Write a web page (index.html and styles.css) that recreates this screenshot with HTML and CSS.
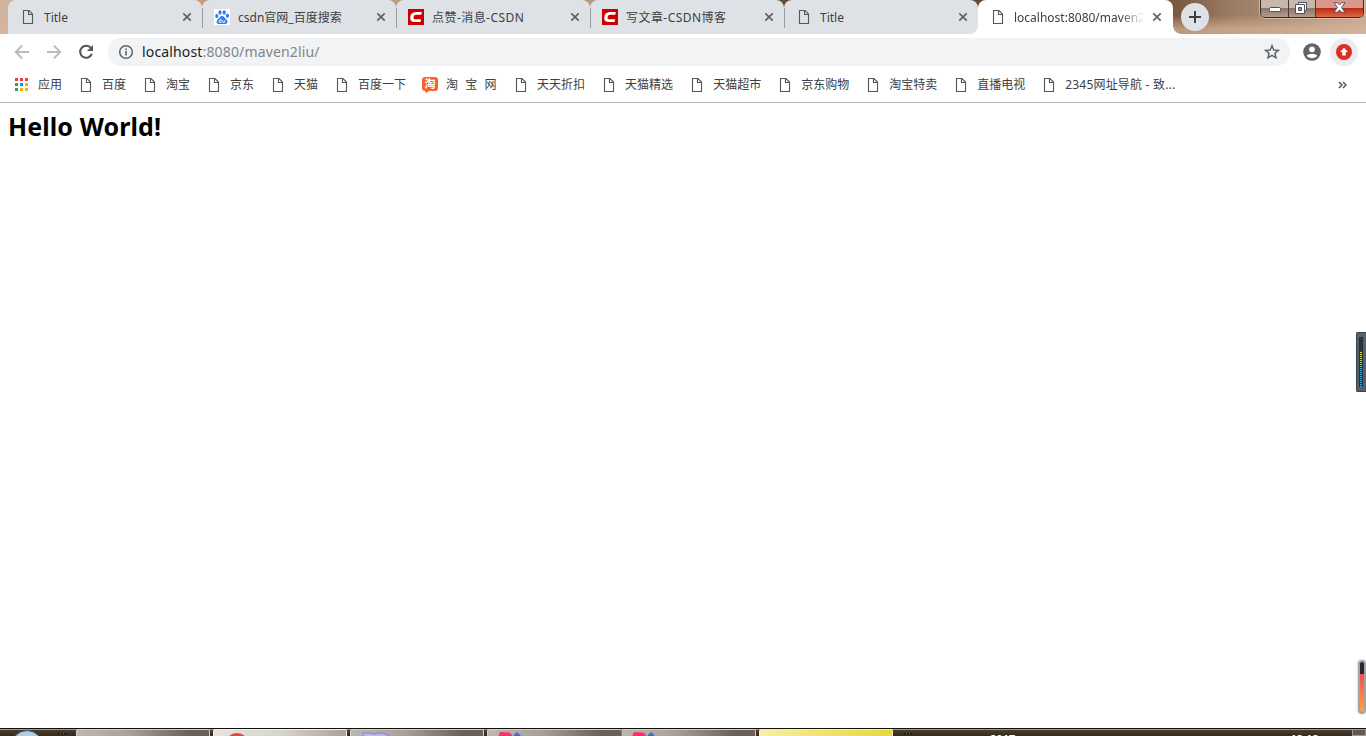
FILE: index.html
```html
<!DOCTYPE html>
<html lang="zh-CN">
<head>
    <meta charset="UTF-8">
    <title>localhost:8080/maven2liu/</title>
    <link rel="stylesheet" href="styles.css">
</head>
<body>
    <svg class="defs" width="0" height="0">
        <symbol id="page" viewBox="0 0 16 16">
            <path d="M3.5 1.5H9L12.5 5V14.5H3.5ZM8.5 1.5V5.5H12.5" fill="none" stroke="#55585b" stroke-width="1.1"/>
        </symbol>
        <symbol id="close" viewBox="0 0 10 10">
            <path d="M1.3 1.3L8.7 8.7M8.7 1.3L1.3 8.7" stroke="#5f6368" stroke-width="1.7"/>
        </symbol>
        <symbol id="csdn" viewBox="0 0 16 16">
            <path d="M0 0H16V16H0Z" fill="#c90000"/>
            <path d="M13.8 3H8Q2.6 3.2 2.2 8.4Q2.1 13 6.8 13H12.6L13.1 10.3H7.8Q5.3 10.3 5.5 8.2Q5.8 5.8 8.4 5.8H13.3Z" fill="#fff"/>
        </symbol>
        <symbol id="app" viewBox="0 0 24 7">
            <path d="M2 2L11 2.5L14 5V7H0Z" fill="#fb3269"/>
            <path d="M19 2L24 7H14Z" fill="#4267d5"/>
        </symbol>
    </svg>

    <div class="browser">
        <div class="tab-strip">
            <div class="tab first">
                <svg class="icon"><use href="#page"/></svg>
                <span class="tab-title">Title</span>
                <svg class="close"><use href="#close"/></svg>
            </div>
            <div class="tab">
                <svg class="icon" viewBox="0 0 16 16">
                    <path d="M0 0H16V16H0Z" fill="#fff"/>
                    <g fill="#2c7df5">
                        <ellipse cx="2.8" cy="7" rx="1.6" ry="2.1"/>
                        <ellipse cx="6" cy="3.4" rx="1.6" ry="2.2"/>
                        <ellipse cx="10.2" cy="3.4" rx="1.6" ry="2.2"/>
                        <ellipse cx="13.4" cy="6.8" rx="1.6" ry="2.1"/>
                        <path d="M8 7C10 7 10.5 9 12.4 10.4C14.5 12 13.4 15 11 15H5C2.4 15 1.8 12 3.8 10.4C5.7 9 6 7 8 7Z"/>
                    </g>
                    <path d="M7 9.5V13.5H5.4Q4.6 12.4 5.4 11.3H7M8.8 11V13.4H10.8V11" fill="none" stroke="#fff" stroke-width=".8"/>
                </svg>
                <span class="tab-title">csdn官网_百度搜索</span>
                <svg class="close"><use href="#close"/></svg>
            </div>
            <div class="tab">
                <svg class="icon"><use href="#csdn"/></svg>
                <span class="tab-title wide">点赞-消息-CSDN</span>
                <svg class="close"><use href="#close"/></svg>
            </div>
            <div class="tab">
                <svg class="icon"><use href="#csdn"/></svg>
                <span class="tab-title wide">写文章-CSDN博客</span>
                <svg class="close"><use href="#close"/></svg>
            </div>
            <div class="tab last">
                <svg class="icon"><use href="#page"/></svg>
                <span class="tab-title">Title</span>
                <svg class="close"><use href="#close"/></svg>
            </div>
            <div class="tab active">
                <svg class="icon"><use href="#page"/></svg>
                <span class="tab-title">localhost:8080/maven2liu/</span>
                <svg class="close"><use href="#close"/></svg>
            </div>
            <div class="new-tab">
                <svg width="12" height="12" viewBox="0 0 12 12"><path d="M6 0V12M0 6H12" stroke="#3c4043" stroke-width="2"/></svg>
            </div>
            <div class="window-buttons">
                <div class="win-btn">
                    <svg width="12" height="6" viewBox="0 0 12 6"><rect x=".5" y=".5" width="11" height="4" rx="1" fill="#fff" stroke="#4c5064"/></svg>
                </div>
                <div class="win-btn restore">
                    <svg width="12" height="12" viewBox="0 0 12 12">
                        <path d="M3.5.5H11.5V8.5H3.5Z" fill="#fff" stroke="#4c5064"/>
                        <path d="M.5 2.5H9.5V11.5H.5Z" fill="#fff" stroke="#4c5064"/>
                        <path d="M3.5 5.5H6.5V8.5H3.5Z" fill="#a09088" stroke="#4c5064"/>
                    </svg>
                </div>
                <div class="win-btn win-close">
                    <svg width="13" height="11" viewBox="0 0 13 11">
                        <path d="M1 .7H4.3L6.5 3L8.7.7H12L8.6 5.5L12 10.3H8.7L6.5 8L4.3 10.3H1L4.4 5.5Z" fill="#fff" stroke="#5b4a5c"/>
                    </svg>
                </div>
            </div>
        </div>

        <div class="toolbar">
            <svg class="nav" viewBox="0 0 16 16"><path d="M15 8H2M8.2 1.5L1.7 8L8.2 14.5" fill="none" stroke="#babcbe" stroke-width="1.9"/></svg>
            <svg class="nav" viewBox="0 0 16 16"><path d="M1 8H14M7.8 1.5L14.3 8L7.8 14.5" fill="none" stroke="#babcbe" stroke-width="1.9"/></svg>
            <svg class="nav" viewBox="0 0 16 16">
                <path d="M13 4.2A6 6 0 1 0 13.8 9.8" fill="none" stroke="#54585d" stroke-width="2.1"/>
                <path d="M15 1V7H9Z" fill="#54585d"/>
            </svg>
            <div class="address">
                <svg width="16" height="16" viewBox="0 0 16 16">
                    <circle cx="8" cy="8" r="6.3" fill="none" stroke="#5f6368" stroke-width="1.5"/>
                    <path d="M8 7V11.5M8 4.4V6" stroke="#5f6368" stroke-width="1.6"/>
                </svg>
                <span class="url">localhost<span>:8080/maven2liu/</span></span>
                <svg class="star" viewBox="0 0 16 16"><path d="M8 1.8L9.8 6L14.4 6.3L10.9 9.3L12 13.8L8 11.4L4 13.8L5.1 9.3L1.6 6.3L6.2 6Z" fill="none" stroke="#5f6368" stroke-width="1.5"/></svg>
            </div>
            <svg class="profile" viewBox="0 0 18 18">
                <circle cx="9" cy="9" r="8.8" fill="#5f6368"/>
                <circle cx="9" cy="6.3" r="2.9" fill="#fff"/>
                <path d="M3.6 12.7C5.5 10 12.5 10 14.4 12.7C12 16 6 16 3.6 12.7Z" fill="#fff"/>
            </svg>
            <div class="update">
                <svg width="16" height="16" viewBox="0 0 16 16">
                    <circle cx="8" cy="8" r="8" fill="#d93025"/>
                    <path d="M8 3.7L12 8H9.8V11.6H6.2V8H4Z" fill="#fff"/>
                </svg>
            </div>
        </div>

        <div class="bookmarks">
            <div class="bookmark apps">
                <svg class="icon" viewBox="0 0 16 16">
                    <path d="M1 1H4V4H1ZM6 1H9V4H6ZM11 1H14V4H11Z" fill="#ea4335"/>
                    <path d="M1 6H4V9H1ZM1 11H4V14H1Z" fill="#34a058"/>
                    <path d="M6 6H9V9H6Z" fill="#1a8cff"/>
                    <path d="M11 6H14V9H11ZM6 11H9V14H6ZM11 11H14V14H11Z" fill="#fbad05"/>
                </svg>应用</div>
            <div class="bookmark"><svg class="icon"><use href="#page"/></svg>百度</div>
            <div class="bookmark"><svg class="icon"><use href="#page"/></svg>淘宝</div>
            <div class="bookmark"><svg class="icon"><use href="#page"/></svg>京东</div>
            <div class="bookmark"><svg class="icon"><use href="#page"/></svg>天猫</div>
            <div class="bookmark"><svg class="icon"><use href="#page"/></svg>百度一下</div>
            <div class="bookmark taobao"><span class="tao">淘</span>淘&nbsp; 宝&nbsp; 网</div>
            <div class="bookmark"><svg class="icon"><use href="#page"/></svg>天天折扣</div>
            <div class="bookmark"><svg class="icon"><use href="#page"/></svg>天猫精选</div>
            <div class="bookmark"><svg class="icon"><use href="#page"/></svg>天猫超市</div>
            <div class="bookmark"><svg class="icon"><use href="#page"/></svg>京东购物</div>
            <div class="bookmark"><svg class="icon"><use href="#page"/></svg>淘宝特卖</div>
            <div class="bookmark"><svg class="icon"><use href="#page"/></svg>直播电视</div>
            <div class="bookmark nav-site"><svg class="icon"><use href="#page"/></svg>2345网址导航 - 致...</div>
            <svg class="more" viewBox="0 0 9 8"><path d="M1 1L4 4L1 7M5 1L8 4L5 7" fill="none" stroke="#55585b" stroke-width="1.5"/></svg>
        </div>

        <main class="content">
            <h2>Hello World!</h2>
        </main>

        <div class="taskbar">
            <div class="start"></div>
            <div class="grip"></div>
            <div class="task"></div>
            <div class="task light">
                <svg width="26" height="7" viewBox="0 0 26 7"><circle cx="13" cy="15" r="12" fill="#dc4c40"/></svg>
            </div>
            <div class="task">
                <svg width="28" height="7" viewBox="0 0 28 7"><path d="M1 3L8 3L13 4L20 3L27 5L25 8H4Z" fill="#b8b8f5" stroke="#8585d8"/></svg>
            </div>
            <div class="task group"><svg width="24" height="7"><use href="#app"/></svg></div>
            <div class="task second"><svg width="24" height="7"><use href="#app"/></svg></div>
            <div class="task yellow"></div>
            <div class="grip tray-grip"></div>
            <span class="year">2017</span>
            <span class="clock">18:18</span>
            <div class="show-desktop"></div>
        </div>
    </div>

    <div class="meter"><div class="meter-bar"></div></div>
    <div class="thermo"></div>
</body>
</html>
```

FILE: styles.css
```css
* {
    box-sizing: border-box;
}

body {
    margin: 0;
    font-family: "Noto Sans", "Noto Sans CJK SC", sans-serif;
    font-size: 12px;
    color: #3c4043;
    background: #fff;
    overflow: hidden;
}

svg {
    display: block;
    flex: none;
}

.defs {
    position: absolute;
}

.browser {
    display: flex;
    flex-direction: column;
    height: 736px;
}

.icon {
    width: 16px;
    height: 16px;
}

/* tabs */
.tab-strip {
    display: flex;
    height: 34px;
    padding-left: 8px;
    background:
        linear-gradient(to bottom, transparent 45%, #d7b59ab0 85%),
        linear-gradient(to right, #d0b5a0 0, #c29c7e 200px, #b9987d 600px, #644b36 790px, #654934 1000px, #7b5b42 1180px, #9b7b61 1230px, #c5aa96 1366px);
}

.tab {
    display: flex;
    align-items: center;
    flex: none;
    width: 194px;
    padding: 0 10px 0 12px;
    background: #dee1e6;
    border-radius: 8px 8px 0 0;
    position: relative;
}

.tab:not(.last):not(.active)::after {
    content: "";
    position: absolute;
    right: -1px;
    top: 8px;
    width: 1px;
    height: 20px;
    background: #9a9ca0;
    z-index: 1;
}

.tab.last {
    border-bottom-right-radius: 8px;
}

.tab.active {
    width: 195px;
    padding-right: 11px;
    background: #fff;
}

.tab.active::before,
.tab.active::after {
    content: "";
    position: absolute;
    bottom: 0;
    width: 8px;
    height: 8px;
}

.tab.active::before {
    left: -8px;
    background: radial-gradient(circle at 0 0, #dee1e6 7.5px, #fff 8px);
}

.tab.active::after {
    right: -8px;
    background: radial-gradient(circle at 100% 0, transparent 7.5px, #fff 8px);
}

.tab-title {
    flex: 1;
    margin-left: 8px;
    padding-top: 2px;
    line-height: 18px;
    white-space: nowrap;
    overflow: hidden;
}

.wide {
    letter-spacing: .45px;
}

.active .tab-title {
    margin-right: 8px;
    -webkit-mask-image: linear-gradient(to right, #000 82%, transparent);
    mask-image: linear-gradient(to right, #000 82%, transparent);
}

.close {
    width: 10px;
    height: 10px;
}

.new-tab {
    display: flex;
    align-items: center;
    justify-content: center;
    width: 28px;
    height: 28px;
    margin: 3px 0 0 8px;
    border-radius: 50%;
    background: #dee1e6;
}

.window-buttons {
    display: flex;
    height: 18px;
    margin: 0 2px 0 auto;
    border: 1px solid #392a25;
    border-top: 0;
    border-radius: 0 0 5px 5px;
    box-shadow: 0 0 0 1px #e2cdbdaa;
    overflow: hidden;
}

.win-btn {
    display: flex;
    align-items: center;
    justify-content: center;
    width: 28px;
    padding-top: 3px;
    border-right: 1px solid #4b382f;
    background: linear-gradient(#c8b8ac 45%, #8e7768 50%, #b39c8b);
}

.restore {
    width: 27px;
    padding: 0 2px 2px 0;
}

.win-close {
    width: 47px;
    padding: 0 0 2px;
    border-right: 0;
    background: linear-gradient(#d8988a 45%, #bc2c13 50%, #de6a43);
}

/* toolbar */
.toolbar {
    display: flex;
    align-items: center;
    height: 36px;
    padding: 0 8px 0 14px;
}

.nav {
    width: 16px;
    height: 16px;
    margin-right: 16px;
}

.address {
    display: flex;
    align-items: center;
    width: 1182px;
    height: 28px;
    margin-left: -2px;
    padding: 0 10px;
    border-radius: 14px;
    background: #f1f3f4;
}

.url {
    flex: 1;
    margin-left: 8px;
    font-size: 14px;
    line-height: 20px;
    letter-spacing: .15px;
    color: #202124;
}

.url span {
    color: #80868b;
}

.star {
    width: 16px;
    height: 16px;
}

.profile {
    width: 18px;
    height: 18px;
    margin-left: 13px;
}

.update {
    display: flex;
    align-items: center;
    justify-content: center;
    width: 28px;
    height: 28px;
    margin-left: 9px;
    border-radius: 50%;
    background: #ececec;
}

/* bookmarks */
.bookmarks {
    display: flex;
    align-items: center;
    height: 33px;
    padding: 0 19px 3px 14px;
    border-bottom: 1px solid #b6b4b6;
    line-height: 18px;
    white-space: nowrap;
}

.bookmark {
    display: flex;
    align-items: center;
    gap: 8px;
    margin-right: 16px;
}

.taobao {
    width: 75px;
    word-spacing: .5px;
}

.nav-site {
    letter-spacing: .2px;
}

.tao {
    position: relative;
    width: 16px;
    height: 14px;
    margin-top: -2px;
    border-radius: 3px;
    background: #f26331;
    color: #fff;
    font-size: 11px;
    line-height: 13px;
    font-weight: bold;
    text-align: center;
}

.tao::after {
    content: "";
    position: absolute;
    left: 3px;
    bottom: -2px;
    border: solid transparent;
    border-width: 2px 3px 0 1px;
    border-top-color: #f26331;
}

.more {
    width: 9px;
    height: 8px;
    margin-left: auto;
}

/* page */
.content {
    flex: 1;
    padding: 8px;
}

.content h2 {
    margin: 0;
    font-size: 25px;
    line-height: 31px;
    letter-spacing: .1px;
    color: #000;
}

/* taskbar */
.taskbar {
    display: flex;
    height: 8px;
    border-top: 1px solid #15100c;
    background: linear-gradient(#a49787 1px, #4b3d2f 1px, #35281f);
    overflow: hidden;
}

.start {
    width: 32px;
    height: 32px;
    margin: 1px 0 0 11px;
    border: 1px solid #1d5580;
    border-radius: 50%;
    background: #b7cbda;
    flex: none;
}

.grip {
    width: 8px;
    height: 1px;
    margin: 4px 10px 0 15px;
    background: repeating-linear-gradient(to right, #15100c 0 2px, #78695a 2px 3px);
}

.task {
    width: 134px;
    height: 8px;
    margin-right: 3px;
    padding-left: 10px;
    border: 1px solid #d5d0cb;
    border-bottom: 0;
    border-radius: 2px 2px 0 0;
    background: linear-gradient(to right, #bcb7b3, #a8a19b 40%, #6b6058 85%);
    flex: none;
}

.light {
    border-color: #f4f2f0;
    background: linear-gradient(to right, #e5e2df, #d8d4cf 50%, #aaa29b);
}

.group {
    margin-right: 0;
    border-right: 0;
}

.second {
    width: 135px;
    border-left-color: #887f78;
}

.yellow {
    border-color: #fbf3a0;
    background: linear-gradient(to right, #f7efaa, #efe26d 50%, #e6d743);
}

.tray-grip {
    margin: 4px 0 0 8px;
}

.year,
.clock {
    color: #fff;
    line-height: 16px;
    margin-top: 2px;
    font-size: 11px;
    font-weight: bold;
}

.year {
    margin-left: 78px;
}

.clock {
    margin-left: 275px;
}

.show-desktop {
    width: 14px;
    margin-left: auto;
    border: 1px solid #a0978e;
    background: #625950;
}

/* desktop gadgets over the page */
.meter {
    position: absolute;
    right: 0;
    top: 332px;
    width: 10px;
    height: 60px;
    padding: 4px 3px 4px 2px;
    border: 1px solid #3c4146;
    border-right: 0;
    border-radius: 2px 0 0 2px;
    background: #56626a;
}

.meter-bar {
    height: 50px;
    border: solid #25303a;
    border-width: 0 1px;
    background:
        linear-gradient(#25303a 50%, transparent 50%) 0 0 / 100% 2px,
        linear-gradient(#343941 15px, #e3da45 15px, #b9cf65 24px, #43b4df 32px, #36a5e6);
}

.thermo {
    position: absolute;
    right: 0;
    top: 660px;
    width: 8px;
    height: 54px;
    border: 2px solid #a3a3a3;
    border-radius: 4px;
    background: linear-gradient(#202936 12px, #f94c55 12px, #fda53a);
    box-shadow: 0 0 3px #bbb;
}
```
